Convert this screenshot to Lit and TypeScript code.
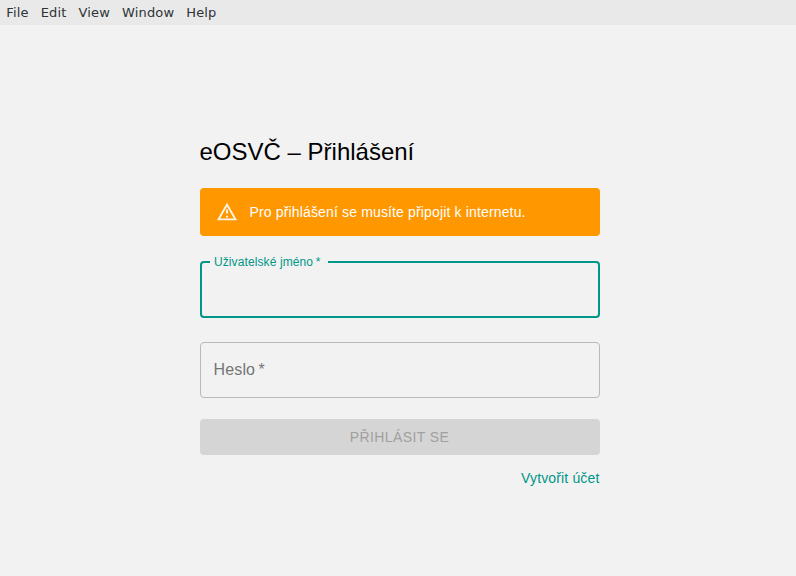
import { LitElement, html, css } from "lit";
import { customElement } from "lit/decorators.js";

@customElement("app-root")
export class AppRoot extends LitElement {
  static styles = css`
    :host {
      display: flex;
      flex-direction: column;
      height: 100vh;
      box-sizing: border-box;
      background: #f2f2f2;
      font-family: "Liberation Sans", Arial, sans-serif;
      overflow: hidden;
    }
    * { box-sizing: border-box; }
    .menubar {
      display: flex;
      flex: none;
      gap: 12px;
      height: 25px;
      padding-left: 6.3px;
      background: #e9e9e9;
      color: #2e3436;
      font: 13px/25px "DejaVu Sans", sans-serif;
      letter-spacing: 0.16px;
    }
    .page {
      width: 400px;
      margin: 111px 0 0 199.5px;
      display: flex;
      flex-direction: column;
    }
    h1 {
      margin: 0;
      font-size: 24px;
      line-height: 32px;
      font-weight: 400;
      color: #000;
    }
    .alert {
      display: flex;
      align-items: center;
      height: 48px;
      margin-top: 20px;
      padding-left: 16px;
      gap: 12px;
      border-radius: 4px;
      background: #ff9800;
      color: #fff;
      font-size: 14px;
      letter-spacing: 0.15px;
    }
    .alert svg { width: 22px; height: 22px; fill: currentColor; opacity: 0.9; }
    .field {
      height: 64px;
      margin: 18px 0 0;
      padding: 0 8px;
      border: 2px solid #009688;
      border-radius: 4px;
    }
    fieldset { min-width: 0; }
    .user legend {
      padding: 0 7.5px 0 4.4px;
      font-size: 12px;
      line-height: 16px;
      letter-spacing: 0.11px;
      color: #009688;
    }
    .password {
      display: flex;
      align-items: center;
      height: 56px;
      margin-top: 24px;
      padding: 0 13px;
      border: 1px solid #b9b9b9;
      color: #757575;
      font-size: 16px;
      letter-spacing: 0.15px;
    }
    button {
      height: 36px;
      margin-top: 21px;
      padding: 0;
      border: 0;
      border-radius: 4px;
      background: #d5d5d5;
      color: #a0a0a0;
      font: 14px "Liberation Sans", Arial, sans-serif;
      letter-spacing: 0.4px;
      text-transform: uppercase;
    }
    .link {
      align-self: flex-end;
      margin-top: 13px;
      font-size: 14px;
      line-height: 20px;
      letter-spacing: 0.15px;
      color: #009688;
    }
  `;

  render() {
    return html`
      <nav class="menubar">
        ${["File", "Edit", "View", "Window", "Help"].map((m) => html`<span>${m}</span>`)}
      </nav>
      <main class="page">
        <h1>eOSVČ – Přihlášení</h1>
        <div class="alert">
          <svg viewBox="0 0 24 24">
            <path d="M12 5.99L19.53 19H4.47L12 5.99M12 2L1 21h22L12 2zm1.1 14h-2.2v2h2.2v-2zm0-6.8h-2.2v4.4h2.2v-4.4z" />
          </svg>
          <span>Pro přihlášení se musíte připojit k internetu.</span>
        </div>
        <fieldset class="field user">
          <legend>Uživatelské jméno&thinsp;*</legend>
        </fieldset>
        <div class="field password">Heslo&thinsp;*</div>
        <button disabled>Přihlásit se</button>
        <a class="link">Vytvořit účet</a>
      </main>
    `;
  }
}
